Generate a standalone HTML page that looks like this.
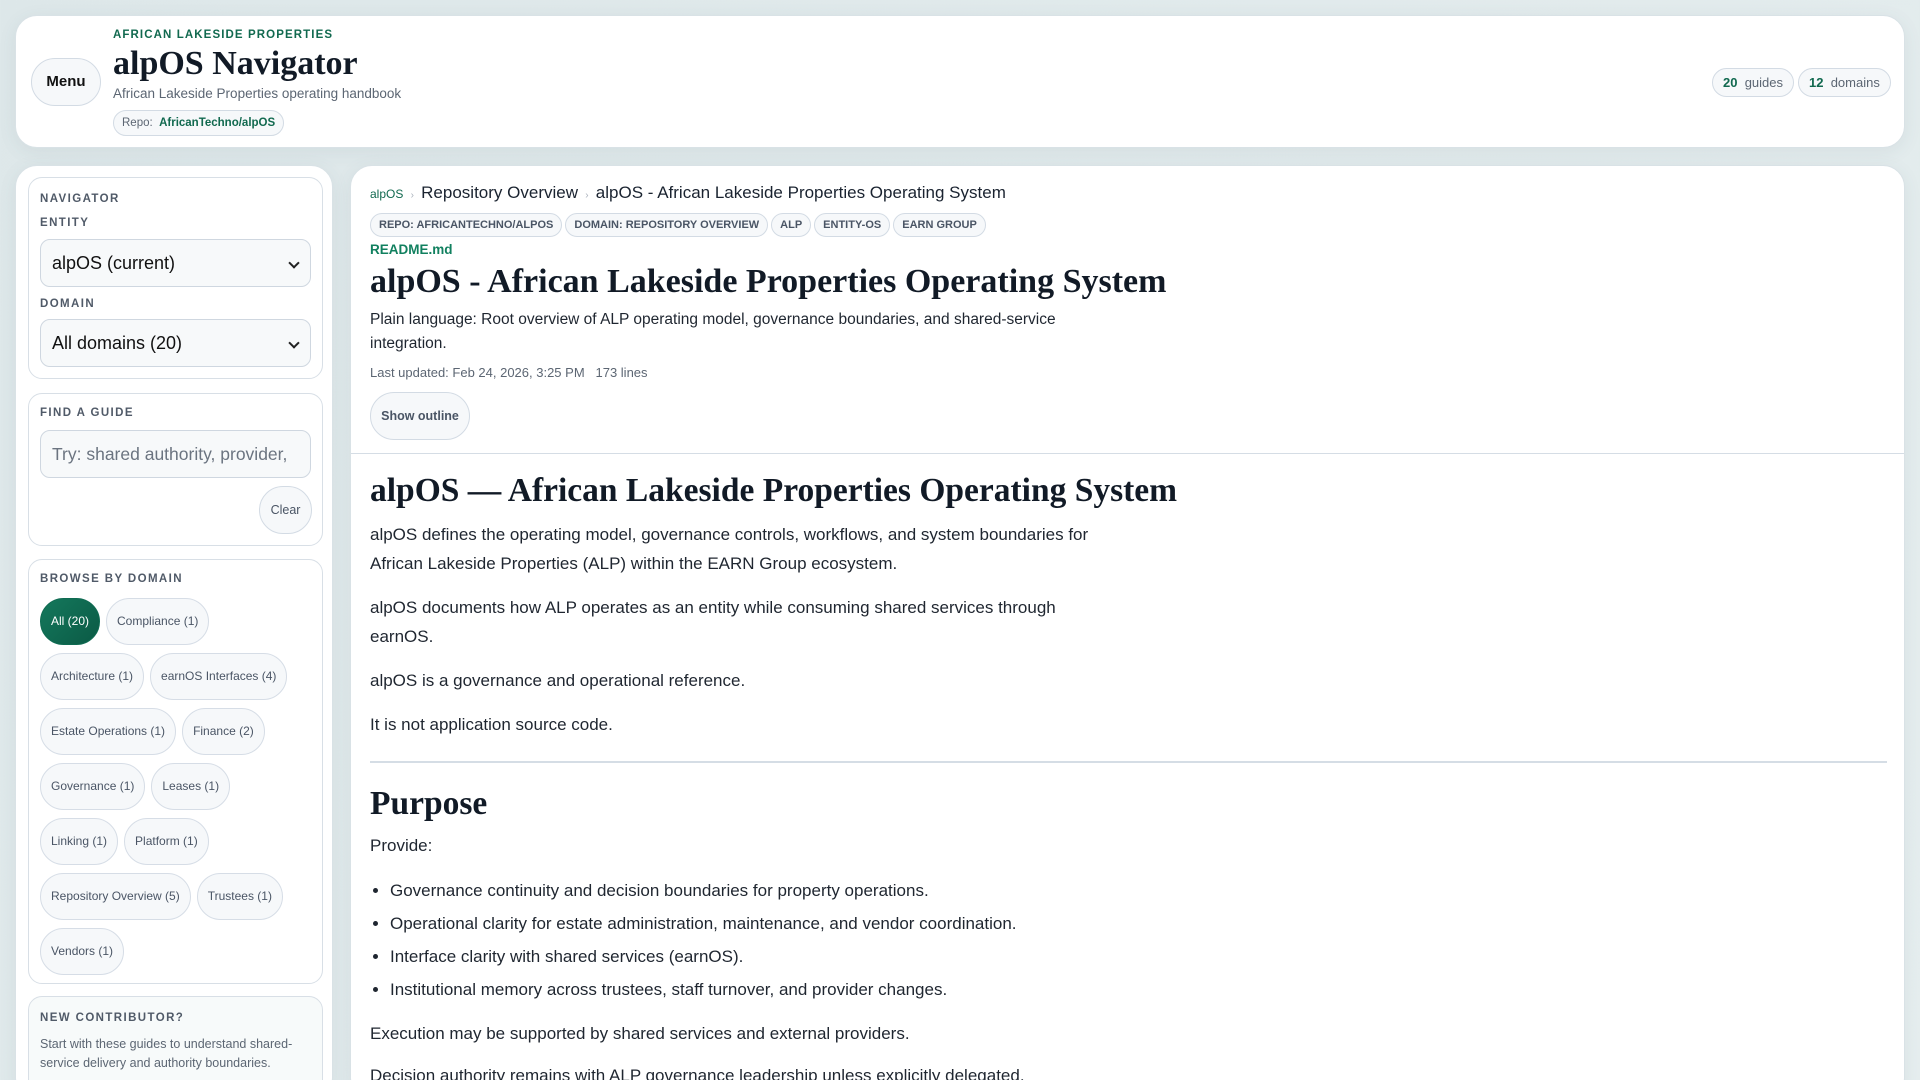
<!DOCTYPE html>
<html style="height:1080px;overflow:hidden"><head><meta charset="utf-8"><style>
*{box-sizing:border-box;margin:0;padding:0}
body{width:1920px;height:1080px;overflow:hidden;background:linear-gradient(135deg,#dde7e9,#e6eeef);font-family:"Liberation Sans",sans-serif;color:#1a2330;position:relative}
.card{position:absolute;background:#fff;border-radius:22px;border:1px solid #d9e2e6;box-shadow:0 4px 18px rgba(60,90,100,.08);overflow:hidden}
.pill{display:inline-block;border:1px solid #d3dbe4;background:#f6f8fa;border-radius:999px}
.lbl{font-size:11.5px;font-weight:bold;letter-spacing:1.4px;color:#505a68;text-transform:uppercase}
.box{position:absolute;left:12px;width:295px;border:1px solid #d8dfe6;border-radius:14px;background:#fff}
.sel{position:absolute;left:11px;width:271px;height:48px;border:1px solid #cfd7e0;border-radius:10px;background:#f7f9fa;font-size:18px;padding:0 11px;line-height:46px;color:#111;white-space:nowrap;overflow:hidden}
.dd:after{content:"";position:absolute;right:12px;top:19px;width:6px;height:6px;border-right:2px solid #222;border-bottom:2px solid #222;transform:rotate(45deg)}
.chips{position:absolute;left:11px;top:38px;width:266px;display:flex;flex-wrap:wrap;gap:8px 6px}
.chip{height:47px;line-height:45px;padding:0 10px;border:1px solid #d6dde6;background:#f6f8fa;border-radius:999px;font-size:12px;color:#4a5565}
.tag{display:inline-block;height:24px;line-height:22px;padding:0 8px;border:1px solid #d3dbe4;background:#f6f8fa;border-radius:999px;font-size:11px;font-weight:bold;color:#4a5565;margin-right:3px}
.serif{font-family:"Liberation Serif",serif;font-weight:bold;color:#111a26}
.md p{font-size:17px;line-height:29px;color:#1f2630;max-width:735px}
</style></head><body>

<div class="card" style="left:15px;top:15px;width:1890px;height:133px">
  <div class="pill" style="position:absolute;left:15px;top:42px;width:70px;height:48px;line-height:46px;text-align:center;font-weight:bold;font-size:15px;color:#111">Menu</div>
  <div style="position:absolute;left:97px;top:13px;font-size:11.5px;font-weight:bold;letter-spacing:1.1px;color:#11694f">AFRICAN LAKESIDE PROPERTIES</div>
  <div class="serif" style="position:absolute;left:97px;top:29px;font-size:34px">alpOS Navigator</div>
  <div style="position:absolute;left:97px;top:70px;font-size:13.5px;color:#5c6673">African Lakeside Properties operating handbook</div>
  <div class="pill" style="position:absolute;left:97px;top:94px;height:26px;line-height:24px;padding:0 8px;font-size:11.5px;color:#5c6673">Repo:&nbsp; <b style="color:#11694f">AfricanTechno/alpOS</b></div>
  <div class="pill" style="position:absolute;left:1696px;top:52px;height:29px;line-height:27px;padding:0 10px;font-size:13px;color:#5c6673"><b style="color:#11694f">20</b>&nbsp; guides</div>
  <div class="pill" style="position:absolute;left:1782px;top:52px;height:29px;line-height:27px;padding:0 10px;font-size:13px;color:#5c6673"><b style="color:#11694f">12</b>&nbsp; domains</div>
</div>

<div class="card" style="left:15px;top:165px;width:318px;height:935px">
  <div class="box" style="top:11px;height:202px">
    <div class="lbl" style="position:absolute;left:11px;top:15px">Navigator</div>
    <div class="lbl" style="position:absolute;left:11px;top:39px">Entity</div>
    <div class="sel dd" style="top:61px">alpOS (current)</div>
    <div class="lbl" style="position:absolute;left:11px;top:120px">Domain</div>
    <div class="sel dd" style="top:141px">All domains (20)</div>
  </div>
  <div class="box" style="top:227px;height:153px">
    <div class="lbl" style="position:absolute;left:11px;top:13px">Find a guide</div>
    <div class="sel" style="top:36px;color:#6b7480;font-size:17.5px">Try: shared authority, provider,</div>
    <div class="pill" style="position:absolute;left:230px;top:92px;width:53px;height:48px;line-height:46px;text-align:center;font-size:12.5px;color:#4a5565">Clear</div>
  </div>
  <div class="box" style="top:393px;height:425px">
    <div class="lbl" style="position:absolute;left:11px;top:13px">Browse by domain</div>
    <div class="chips">
      <div class="chip" style="background:linear-gradient(135deg,#14785c,#0b5a45);color:#fff;border-color:#0f6b52">All (20)</div>
      <div class="chip">Compliance (1)</div>
      <div class="chip">Architecture (1)</div>
      <div class="chip">earnOS Interfaces (4)</div>
      <div class="chip">Estate Operations (1)</div>
      <div class="chip">Finance (2)</div>
      <div class="chip">Governance (1)</div>
      <div class="chip">Leases (1)</div>
      <div class="chip">Linking (1)</div>
      <div class="chip">Platform (1)</div>
      <div class="chip">Repository Overview (5)</div>
      <div class="chip">Trustees (1)</div>
      <div class="chip">Vendors (1)</div>
    </div>
  </div>
  <div class="box" style="top:830px;height:120px;background:#f7fafa">
    <div class="lbl" style="position:absolute;left:11px;top:15px">New contributor?</div>
    <div style="position:absolute;left:11px;top:38px;width:275px;font-size:12.5px;line-height:19px;color:#5c6673">Start with these guides to understand shared-service delivery and authority boundaries.</div>
  </div>
</div>

<div class="card" style="left:350px;top:165px;width:1555px;height:935px">
  <div style="position:absolute;left:19px;top:17px;white-space:nowrap"><span style="font-size:12px;color:#11694f">alpOS</span> <span style="color:#aab2bc;font-size:10px">&nbsp;›&nbsp;</span> <span style="font-size:17px">Repository Overview</span> <span style="color:#aab2bc;font-size:10px">&nbsp;›&nbsp;</span> <span style="font-size:17px">alpOS - African Lakeside Properties Operating System</span></div>
  <div style="position:absolute;left:19px;top:47px;white-space:nowrap"><span class="tag">REPO: AFRICANTECHNO/ALPOS</span><span class="tag">DOMAIN: REPOSITORY OVERVIEW</span><span class="tag">ALP</span><span class="tag">ENTITY-OS</span><span class="tag">EARN GROUP</span></div>
  <div style="position:absolute;left:19px;top:76px;font-size:13.5px;font-weight:bold;color:#11805f">README.md</div>
  <div class="serif" style="position:absolute;left:19px;top:97px;font-size:34px;white-space:nowrap">alpOS - African Lakeside Properties Operating System</div>
  <div style="position:absolute;left:19px;top:142px;width:700px;font-size:15.5px;line-height:24px;color:#1f2630">Plain language: Root overview of ALP operating model, governance boundaries, and shared-service integration.</div>
  <div style="position:absolute;left:19px;top:199px;font-size:13px;color:#5c6673">Last updated: Feb 24, 2026, 3:25 PM &nbsp; 173 lines</div>
  <div class="pill" style="position:absolute;left:19px;top:226px;width:100px;height:48px;line-height:46px;text-align:center;font-size:12.5px;font-weight:bold;color:#4a5565">Show outline</div>
  <div style="position:absolute;left:0;right:0;top:287px;border-top:1px solid #d5dde5"></div>
  <div class="md" style="position:absolute;left:19px;top:304px;width:1517px">
    <div class="serif" style="font-size:33.5px;line-height:42px">alpOS — African Lakeside Properties Operating System</div>
    <p style="margin-top:8px">alpOS defines the operating model, governance controls, workflows, and system boundaries for African Lakeside Properties (ALP) within the EARN Group ecosystem.</p>
    <p style="margin-top:15px">alpOS documents how ALP operates as an entity while consuming shared services through earnOS.</p>
    <p style="margin-top:15px">alpOS is a governance and operational reference.</p>
    <p style="margin-top:15px">It is not application source code.</p>
    <div style="border-top:2px solid #d5dde5;margin-top:22px;width:1517px"></div>
    <div class="serif" style="font-size:33.5px;line-height:42px;margin-top:20px">Purpose</div>
    <p style="margin-top:6px">Provide:</p>
    <ul style="margin-top:14px;padding-left:20px;font-size:17px;color:#1f2630">
      <li style="line-height:33px">Governance continuity and decision boundaries for property operations.</li>
      <li style="line-height:33px">Operational clarity for estate administration, maintenance, and vendor coordination.</li>
      <li style="line-height:33px">Interface clarity with shared services (earnOS).</li>
      <li style="line-height:33px">Institutional memory across trustees, staff turnover, and provider changes.</li>
    </ul>
    <p style="margin-top:13px">Execution may be supported by shared services and external providers.</p>
    <p style="margin-top:13px;max-width:1000px">Decision authority remains with ALP governance leadership unless explicitly delegated.</p>
  </div>
</div>
</body></html>
